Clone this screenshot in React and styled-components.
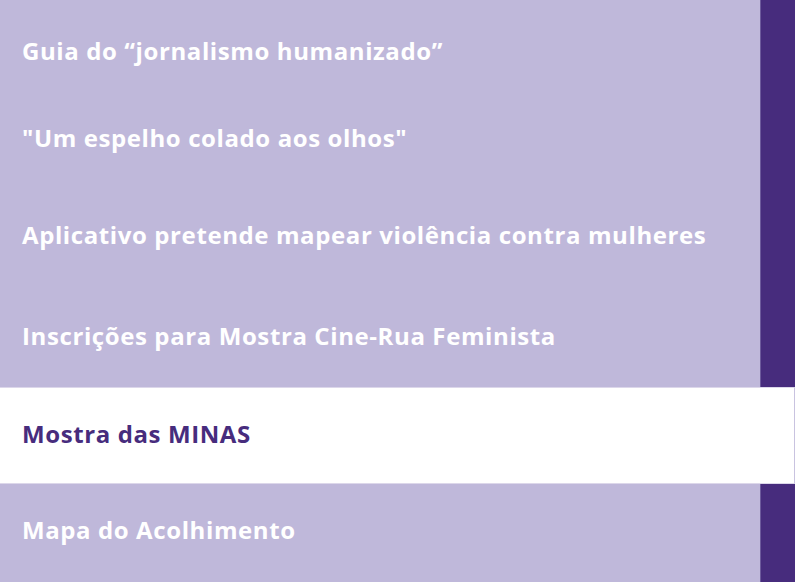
import React from 'react';
import styled, { createGlobalStyle } from 'styled-components';

const GlobalStyle = createGlobalStyle`
  html, body {
    margin: 0;
    padding: 0;
    background: #bfb8da;
  }
`;

const items = [
  { title: 'Guia do “jornalismo humanizado”', height: 92, pad: 34 },
  { title: '"Um espelho colado aos olhos"', height: 96, pad: 29 },
  { title: 'Aplicativo pretende mapear violência contra mulheres', height: 102, pad: 30 },
  { title: 'Inscrições para Mostra Cine-Rua Feminista', height: 97, pad: 29 },
  { title: 'Mostra das MINAS', height: 97, pad: 29 },
  { title: 'Mapa do Acolhimento', height: 98, pad: 29 },
];

// Styled Components
const List = styled.ul`
  list-style: none;
  margin: 0;
  padding: 0;
  width: 795px;
  font-family: 'Open Sans', Lato, sans-serif;
`;

const Row = styled.li`
  display: flex;
  height: ${(p) => p.$height}px;
  box-sizing: border-box;
  background: ${(p) => (p.$active ? '#ffffff' : '#bfb8da')};
  border-top: ${(p) => (p.$active ? '1px solid #dcd7ea' : 'none')};
  border-bottom: ${(p) => (p.$active ? '1px solid #dcd7ea' : 'none')};
  border-right: ${(p) => (p.$active ? '1px solid #c9c3e0' : 'none')};
`;

const Title = styled.a`
  flex: 1;
  display: block;
  padding: ${(p) => p.$pad}px 0 0 22px;
  font-size: 24px;
  font-weight: 700;
  letter-spacing: 0.6px;
  color: ${(p) => (p.$active ? '#472c7d' : '#ffffff')};
  text-decoration: none;
`;

const Bar = styled.span`
  width: 34px;
  background: #472c7d;
  border-left: 1px solid #6d5a9c;
`;

const App = () => {
  const active = 4;
  return (
    <>
      <GlobalStyle />
      <List>
        {items.map((item, i) => (
          <Row key={item.title} $height={item.height} $active={i === active}>
            <Title href="#" $pad={item.pad} $active={i === active}>
              {item.title}
            </Title>
            {i !== active && <Bar />}
          </Row>
        ))}
      </List>
    </>
  );
};

export default App;
